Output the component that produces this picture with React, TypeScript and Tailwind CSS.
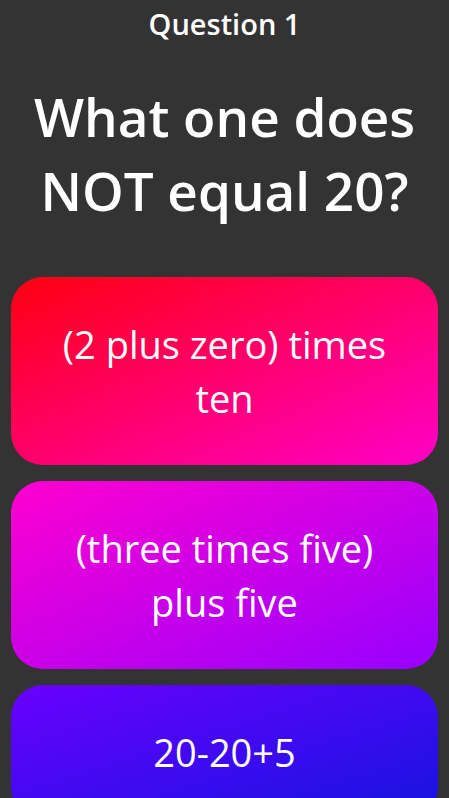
export default function App() {
  const answers = [
    { text: '(2 plus zero) times ten', bg: 'bg-[linear-gradient(to_bottom_right,#ff0010,#ff00c8)]' },
    { text: '(three times five) plus five', bg: 'bg-[linear-gradient(to_bottom_right,#ff00d0,#9600ff)]' },
    { text: '20-20+5', bg: 'bg-[linear-gradient(to_bottom_right,#6a00ff,#1414e0)]' },
  ];

  return (
    <div className="min-h-screen bg-[#333333] text-white font-['Open_Sans','Noto_Sans',sans-serif] overflow-hidden">
      <div className="pt-1 text-center text-[29px] leading-[40px] font-semibold">Question 1</div>
      <h1 className="mt-9 px-3 text-center text-[53px] leading-[74px] font-semibold">
        What one does NOT equal 20?
      </h1>
      <div className="mt-[49px] px-[11px] flex flex-col gap-4">
        {answers.map((a) => (
          <button
            key={a.text}
            className={`w-full rounded-[32px] py-10 px-9 text-center text-[38px] leading-[54px] ${a.bg}`}
          >
            {a.text}
          </button>
        ))}
      </div>
    </div>
  );
}
